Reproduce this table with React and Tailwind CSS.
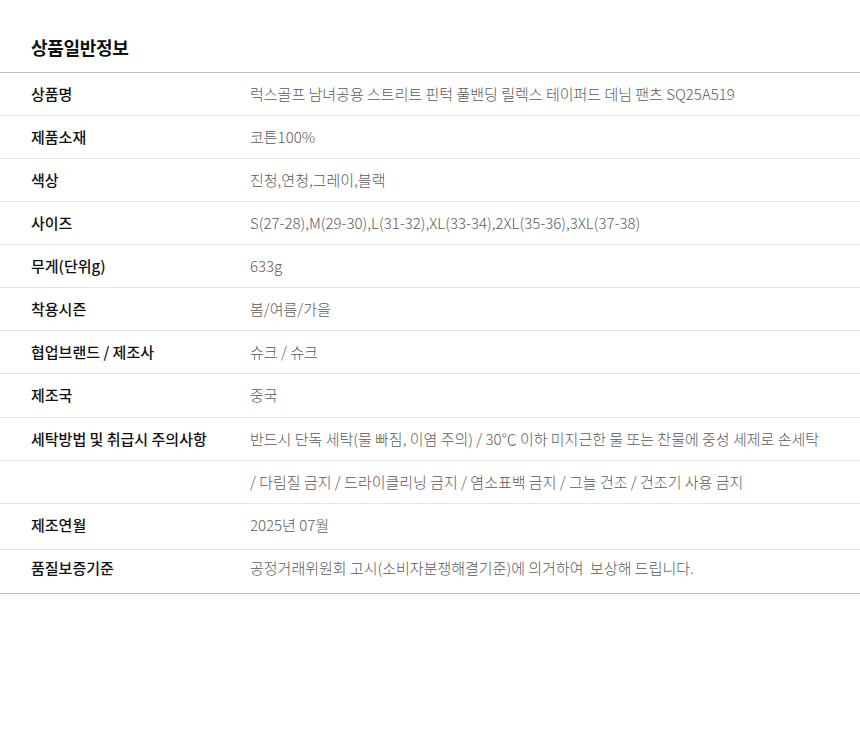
import React from 'react';

const rows = [
    { label: '상품명', value: '럭스골프 남녀공용 스트리트 핀턱 풀밴딩 릴렉스 테이퍼드 데님 팬츠 SQ25A519', h: 'h-[43px] pt-[10px]' },
    { label: '제품소재', value: '코튼100%', h: 'h-[43px] pt-[10px]' },
    { label: '색상', value: '진청,연청,그레이,블랙', h: 'h-[43px] pt-[10px]' },
    { label: '사이즈', value: 'S(27-28),M(29-30),L(31-32),XL(33-34),2XL(35-36),3XL(37-38)', h: 'h-[43px] pt-[10px]' },
    { label: '무게(단위g)', value: '633g', h: 'h-[43px] pt-[10px]' },
    { label: '착용시즌', value: '봄/여름/가을', h: 'h-[43px] pt-[10px]' },
    { label: '협업브랜드 / 제조사', value: '슈크 / 슈크', h: 'h-[43px] pt-[10px]' },
    { label: '제조국', value: '중국', h: 'h-[44px] pt-[10px]' },
    { label: '세탁방법 및 취급시 주의사항', value: '반드시 단독 세탁(물 빠짐, 이염 주의) / 30℃ 이하 미지근한 물 또는 찬물에 중성 세제로 손세탁', h: 'h-[43px] pt-[10px]' },
    { label: '', value: '/ 다림질 금지 / 드라이클리닝 금지 / 염소표백 금지 / 그늘 건조 / 건조기 사용 금지', h: 'h-[43px] pt-[10px]' },
    { label: '제조연월', value: '2025년 07월', h: 'h-[46px] pt-[10px]' },
    { label: '품질보증기준', value: '공정거래위원회 고시(소비자분쟁해결기준)에 의거하여  보상해 드립니다.', h: 'h-[43px] pt-[7px]' },
];

const App = () => {
    return (
        <div
            className="w-[860px] h-[744px] bg-white"
            style={{ fontFamily: '"Noto Sans CJK KR", "Noto Sans", sans-serif' }}
        >
            <h3 className="pl-[31px] pt-[35px] pb-[12px] text-[18px] leading-[25px] font-bold text-[#111] tracking-[-0.3px]">
                상품일반정보
            </h3>
            <div className="border-t border-b border-[#bdbdbd]">
                {rows.map((row, i) => (
                    <div
                        key={i}
                        className={`flex items-start leading-[22px] ${row.h} ${i < rows.length - 1 ? 'border-b border-[#e3e3e3]' : ''}`}
                    >
                        <div className="w-[250px] shrink-0 pl-[31px] text-[15px] font-medium text-[#111]">
                            {row.label}
                        </div>
                        <div className="text-[15px] font-light text-[#5a5a5a] whitespace-pre">
                            {row.value}
                        </div>
                    </div>
                ))}
            </div>
        </div>
    );
};

export default App;
